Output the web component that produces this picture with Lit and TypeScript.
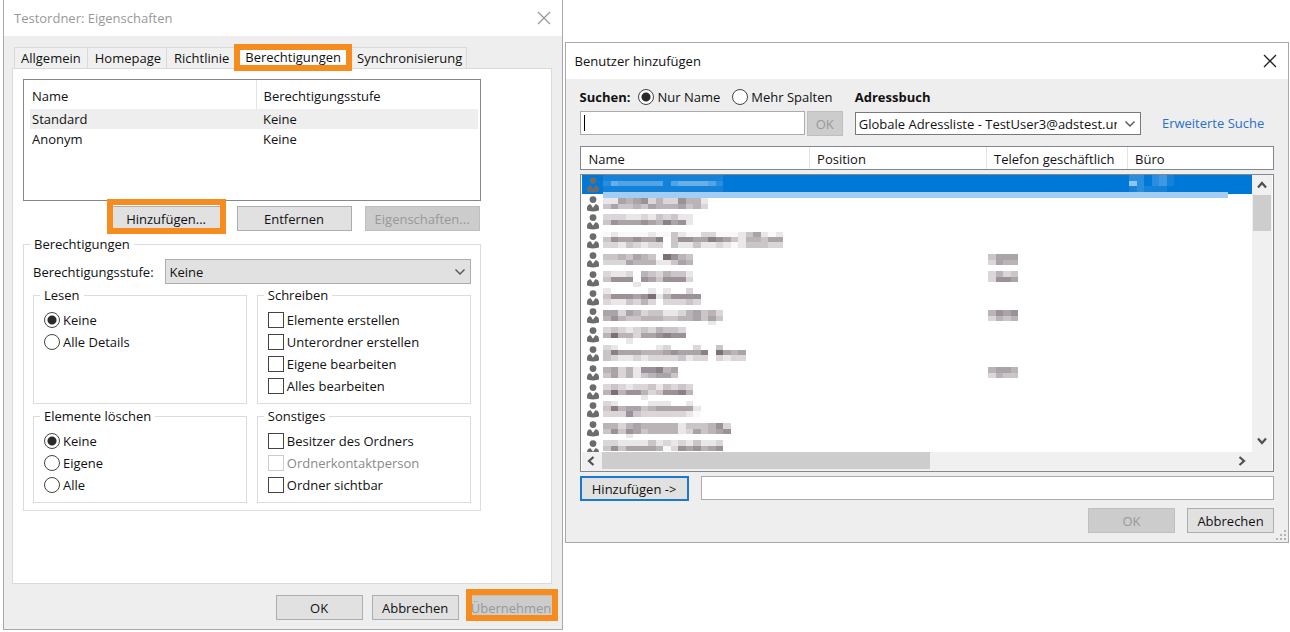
import { LitElement, html, css, svg, nothing } from "lit";
import { customElement, property, state } from "lit/decorators.js";

const controls = css`
  * {
    box-sizing: border-box;
  }
  button,
  input,
  select,
  legend,
  table {
    font: inherit;
    color: inherit;
  }
  .dialog {
    background: #eee;
    border: 1px solid #a9a9a9;
  }
  .titlebar {
    display: flex;
    align-items: center;
    justify-content: space-between;
    height: 36px;
    padding: 0 11px 0 10px;
    background: #fff;
  }
  .title {
    margin: 0;
    font-size: 13px;
    font-weight: 400;
  }
  .close {
    display: flex;
    padding: 0;
    border: 0;
    background: none;
  }
  .btn {
    height: 25px;
    min-width: 87px;
    padding: 0;
    border: 1px solid #adadad;
    border-radius: 0;
    background: #e1e1e1;
    font-weight: 500;
  }
  .btn:disabled {
    border-color: #bfbfbf;
    background: #ccc;
    color: #999;
    font-weight: 400;
  }
  .choice {
    display: flex;
    align-items: center;
    gap: 3px;
    height: 22px;
    white-space: nowrap;
  }
  .choice.off {
    color: #8a8a8a;
  }
  .tick {
    appearance: none;
    flex: none;
    width: 16px;
    height: 16px;
    margin: 0;
    border: 1px solid #444;
    background: #fff;
  }
  .tick[type="radio"] {
    border-radius: 50%;
  }
  .tick[type="radio"]:checked {
    background: radial-gradient(circle, #2a2a2a 4px, #fff 5px);
  }
  .tick:disabled {
    border-color: #ccc;
  }
  .pick {
    position: relative;
    display: block;
  }
  .pick select {
    display: block;
    appearance: none;
    width: 100%;
    border: 1px solid #adadad;
    border-radius: 0;
    background: #e1e1e1;
  }
  .pick svg {
    position: absolute;
    right: 5px;
    top: 50%;
    margin-top: -4px;
    pointer-events: none;
  }
  .marked {
    position: relative;
  }
  .marked::after {
    content: "";
    position: absolute;
    border: 6px solid #f78c1e;
    pointer-events: none;
  }
  table {
    width: 100%;
    border-collapse: collapse;
    table-layout: fixed;
  }
  th {
    font-weight: 400;
    text-align: left;
  }
`;

const cross = html`<svg width="14" height="14" viewBox="0 0 14 14" fill="none" stroke="currentColor" stroke-width="1.3">
  <path d="M1 1l12 12M13 1L1 13" />
</svg>`;

const chevron = html`<svg width="12" height="8" viewBox="0 0 12 8" fill="none" stroke="#555" stroke-width="1.4">
  <path d="M1.5 1.5L6 6l4.500-4.500" />
</svg>`;

const arrow = (d: string) => html`<svg width="12" height="12" viewBox="0 0 12 12" fill="none" stroke="#505050" stroke-width="2.200">
  <path d=${d} />
</svg>`;

interface Choice {
  label: string;
  on?: boolean;
  off?: boolean;
}

@customElement("choice-group")
class ChoiceGroup extends LitElement {
  @property() legend = "";
  @property() kind = "radio";
  @property({ attribute: false }) items: Choice[] = [];

  static styles = [
    controls,
    css`
      :host {
        display: grid;
      }
      .group {
        min-width: 0;
        margin: 0;
        padding: 5px 10px 6px;
        border: 1px solid #dcdcdc;
      }
      legend {
        height: 18px;
        margin-left: -4px;
        padding: 0 4px;
        line-height: 18px;
      }
    `,
  ];

  render() {
    return html`<fieldset class="group">
      <legend>${this.legend}</legend>
      ${this.items.map(
        (c) => html`<label class="choice ${c.off ? "off" : ""}">
          <input class="tick" type=${this.kind} name="choice" .checked=${!!c.on} ?disabled=${!!c.off} />${c.label}
        </label>`
      )}
    </fieldset>`;
  }
}

@customElement("folder-properties")
class FolderProperties extends LitElement {
  @state() tabs = ["Allgemein", "Homepage", "Richtlinie", "Berechtigungen", "Synchronisierung"];
  @state() rights = [
    ["Standard", "Keine"],
    ["Anonym", "Keine"],
  ];

  static styles = [
    controls,
    css`
      :host {
        display: block;
      }
      .dialog {
        border-top: 0;
      }
      .title,
      .close {
        color: #999;
      }
      .tabs {
        display: flex;
        align-items: flex-end;
        height: 32px;
        padding-left: 10px;
      }
      .tab {
        height: 21px;
        padding: 0 5px 0 7px;
        border: 1px solid #dadada;
        border-left-width: 0;
        border-bottom: 0;
        background: #f0f0f0;
        font-weight: 500;
        white-space: nowrap;
        line-height: 20px;
      }
      .tab:first-child {
        border-left-width: 1px;
        padding: 0 6px;
      }
      .tab.marked {
        height: 23px;
        padding: 0 10px;
        background: #fff;
        line-height: 20px;
      }
      .tab.marked::after {
        inset: -2px -1px -3px -1px;
      }
      .tab.marked + .tab {
        padding: 0 4px 0 5px;
      }
      .panel {
        margin: 0 10px 0 8px;
        padding: 10px 70px 72px 10px;
        border: 1px solid #dadada;
        background: #fff;
      }
      .rights {
        height: 122px;
        padding: 0 2px 0 6px;
        border: 1px solid #828790;
      }
      th {
        height: 29px;
        padding: 2px 0 0 2px;
      }
      th:first-child {
        width: 226px;
      }
      th + th {
        border-left: 1px solid #e4e4e4;
      }
      td {
        height: 20px;
        padding: 0 0 0 2px;
        line-height: 20px;
      }
      th + th,
      td + td {
        padding-left: 7px;
      }
      .current {
        background: #eee;
      }
      .actions {
        display: flex;
        justify-content: flex-end;
        gap: 13px;
        margin-top: 5px;
        padding-right: 1px;
      }
      .actions .btn {
        width: 115px;
      }
      .actions .marked::after {
        inset: -8px -3px -4px;
      }
      .outer {
        min-width: 0;
        margin: 4px 0 0;
        padding: 6px 9px 7px;
        border: 1px solid #dcdcdc;
      }
      .outer legend {
        height: 18px;
        margin-left: -3px;
        padding: 0 4px;
        line-height: 18px;
      }
      .level {
        display: grid;
        grid-template-columns: auto 1fr;
        align-items: center;
        gap: 11px;
      }
      .level select {
        height: 25px;
        padding: 0 20px 0 4px;
      }
      .groups {
        display: grid;
        grid-template-columns: 1fr 1fr;
        gap: 3px 10px;
        margin-top: 2px;
      }
      .footer {
        display: flex;
        justify-content: flex-end;
        gap: 9px;
        padding: 11px 7px 9px;
      }
      .footer .marked::after {
        inset: -7px -4px -2px -3px;
      }
    `,
  ];

  render() {
    return html`<section class="dialog" aria-label="Testordner: Eigenschaften">
      <header class="titlebar">
        <h1 class="title">Testordner: Eigenschaften</h1>
        <button class="close" aria-label="Schließen">${cross}</button>
      </header>
      <div class="tabs" role="tablist">
        ${this.tabs.map(
          (t, i) => html`<button class="tab ${i === 3 ? "marked" : ""}" role="tab" aria-selected=${i === 3}>${t}</button>`
        )}
      </div>
      <div class="panel">
        <div class="rights">
          <table>
            <thead>
              <tr><th>Name</th><th>Berechtigungsstufe</th></tr>
            </thead>
            <tbody>
              ${this.rights.map(
                ([name, level], i) => html`<tr class=${i ? "" : "current"}><td>${name}</td><td>${level}</td></tr>`
              )}
            </tbody>
          </table>
        </div>
        <div class="actions">
          <button class="btn marked">Hinzufügen...</button>
          <button class="btn">Entfernen</button>
          <button class="btn" disabled>Eigenschaften...</button>
        </div>
        <fieldset class="outer">
          <legend>Berechtigungen</legend>
          <div class="level">
            <label for="level">Berechtigungsstufe:</label>
            <span class="pick"><select id="level"><option>Keine</option></select>${chevron}</span>
          </div>
          <div class="groups">
            <choice-group legend="Lesen" .items=${[{ label: "Keine", on: true }, { label: "Alle Details" }]}></choice-group>
            <choice-group
              legend="Schreiben"
              kind="checkbox"
              .items=${[
                { label: "Elemente erstellen" },
                { label: "Unterordner erstellen" },
                { label: "Eigene bearbeiten" },
                { label: "Alles bearbeiten" },
              ]}
            ></choice-group>
            <choice-group
              legend="Elemente löschen"
              .items=${[{ label: "Keine", on: true }, { label: "Eigene" }, { label: "Alle" }]}
            ></choice-group>
            <choice-group
              legend="Sonstiges"
              kind="checkbox"
              .items=${[
                { label: "Besitzer des Ordners" },
                { label: "Ordnerkontaktperson", off: true },
                { label: "Ordner sichtbar" },
              ]}
            ></choice-group>
          </div>
        </fieldset>
      </div>
      <footer class="footer">
        <button class="btn">OK</button>
        <button class="btn">Abbrechen</button>
        <button class="btn marked" disabled>Übernehmen</button>
      </footer>
    </section>`;
  }
}

/* Redacted entries: each string is a strip of mosaic cells, digit = darkness. */
const people: { name: string[]; phone?: string[] }[] = [
  { name: ["1111111111111111", "2544444414555542", "1111111111111111"] },
  { name: ["11545624226441", "35334354445342"] },
  { name: ["222112132311", "365556547561"] },
  { name: ["010000100310022000135101", "36556557.366557653144355", "22132122.311311210133322"] },
  { name: ["3343543.8643", "222544411354"], phone: ["3555", "2544"] },
  { name: ["2112.4324331", "3666.6536662", "....1......."], phone: ["2423", "2665"] },
  { name: ["1.....1.1..2.", "3666568146666", "2113242.22232"] },
  { name: ["5525423311245342", "4643344433445353", "..............1."], phone: ["4656", "2434"] },
  { name: ["23212324332", "48442556766", "...1......."] },
  { name: ["21.....12...2..3", "37555444565557.8545", "32112122223122.2122"] },
  { name: ["4524166745", "3524134553"], phone: ["4554", "2433"] },
  { name: ["232122313232", "484664236674", ".....1......"] },
  { name: ["21....111..1.", "3745534555551", "2226322222210"] },
  { name: ["44245444441333462", "36365344441253456", "...1............."] },
  { name: ["2211113121213112", "3635555402656456"] },
];

const tone = (n: number, x: number) => `rgb(${250 - n * 16},${248 - n * 17},${249 - n * 16 - (x % 3)})`;

const mosaic = (strips: string[], dy: number, blue = false) => {
  const cols = Math.max(...strips.map((s) => s.length));
  return html`<svg class="mosaic" width=${Math.ceil(cols * 7.5)} height="19" shape-rendering="crispEdges">
    ${strips.map((s, y) =>
      [...s].map((c, x) =>
        c === "."
          ? nothing
          : svg`<rect x=${x * 7.5} y=${dy + y * 5.7} width="7.500" height="5.700"
              fill=${blue ? "#cfe6fa" : tone(Number(c), x)} fill-opacity=${blue ? Number(c) * 0.1 : 1} />`
      )
    )}
  </svg>`;
};

const person = html`<svg class="person" width="14" height="17" viewBox="0 0 14 17" fill="#6c6c6c">
  <circle cx="7" cy="4.600" r="3.400" />
  <path d="M1 15.300V13c0-2.200 1.500-3.500 3.600-3.700L7 12.800l2.400-3.500C11.500 9.500 13 10.800 13 13v2.300c-1 .8-3 1.100-6 1.100s-5-.3-6-1.100z" />
</svg>`;

@customElement("add-users")
class AddUsers extends LitElement {
  @state() columns = ["Name", "Position", "Telefon geschäftlich", "Büro"];

  static styles = [
    controls,
    css`
      :host {
        display: block;
      }
      .titlebar {
        padding: 0 11px 0 9px;
      }
      .close {
        color: #222;
      }
      .body {
        padding: 7px 14px 9px;
      }
      .search {
        display: grid;
        grid-template-columns: 263fr 286fr 121fr;
        column-gap: 12px;
        align-items: end;
      }
      .modes {
        display: flex;
        align-items: center;
        height: 22px;
        margin-bottom: 3px;
      }
      .modes .choice + .choice {
        margin-left: 12px;
      }
      .strong {
        font-weight: 700;
      }
      .modes .strong {
        margin-right: 8px;
      }
      .query {
        display: flex;
        gap: 2px;
      }
      .field {
        flex: 1;
        min-width: 0;
        height: 24px;
        padding: 0 4px;
        border: 1px solid #ababab;
        border-radius: 0;
        background: #fff;
      }
      .query .field {
        background: linear-gradient(#000, #000) 3px 3px / 1px 16px no-repeat #fff;
      }
      .query .btn {
        min-width: 36px;
      }
      .book {
        display: flex;
        align-items: center;
        height: 22px;
        margin-bottom: 4px;
      }
      .pick {
        margin-bottom: 1px;
      }
      .pick select {
        height: 23px;
        padding: 0 23px 0 3px;
        border-color: #7a7a7a;
        background: #fff;
      }
      .more {
        height: 22px;
        margin-bottom: 2px;
        padding-left: 9px;
        color: #2a6fc9;
        line-height: 22px;
        text-decoration: none;
        white-space: nowrap;
      }
      .heads {
        margin-top: 10px;
        border: 1px solid #828790;
        background: #fff;
      }
      .c1 {
        width: 229px;
      }
      .c2 {
        width: 177px;
      }
      .c3 {
        width: 141px;
      }
      th {
        height: 22px;
        padding: 1px 0 0 8px;
        line-height: 20px;
        white-space: nowrap;
      }
      th + th {
        padding-left: 7px;
        border-left: 1px solid #e4e4e4;
      }
      .list {
        position: relative;
        display: grid;
        grid-template-columns: 1fr 20px;
        grid-template-rows: 277px 19px;
        margin-top: 4px;
        padding: 0 1px;
        border: 1px solid #828790;
        background: #fff;
      }
      .view {
        overflow: hidden;
      }
      .view table {
        height: 282px;
      }
      .view td {
        padding: 0;
        overflow: hidden;
      }
      .cell {
        display: flex;
        align-items: center;
        height: 18px;
        overflow: hidden;
      }
      .person {
        flex: none;
        margin: 0 3px 0 4px;
      }
      .mosaic {
        display: block;
        flex: none;
      }
      .chosen {
        background: #0078d7;
      }
      .band {
        position: absolute;
        left: 22px;
        right: 45px;
        top: 17px;
        height: 6px;
        background: #a4cdf1;
      }
      .vbar {
        display: flex;
        flex-direction: column;
        align-items: center;
        padding: 4px 1px 5px;
        background: #f0f0f0;
      }
      .vthumb {
        align-self: stretch;
        height: 36px;
        margin: 4px 0 auto;
        background: #cdcdcd;
      }
      .hbar {
        grid-column: 1 / 3;
        display: flex;
        align-items: center;
        padding: 0 24px 2px 3px;
        background: #f0f0f0;
      }
      .hthumb {
        flex: 0 0 328px;
        height: 17px;
        margin: 0 auto 0 5px;
        background: #cdcdcd;
      }
      .chosenlist {
        display: flex;
        align-items: flex-start;
        gap: 12px;
        margin-top: 4px;
      }
      .chosenlist .btn {
        width: 109px;
        border: 2px solid #1a78cf;
      }
      .footer {
        display: flex;
        justify-content: flex-end;
        gap: 12px;
        margin-top: 7px;
      }
      .grip {
        position: absolute;
        right: 1px;
        bottom: 1px;
      }
      .dialog {
        position: relative;
      }
    `,
  ];

  render() {
    return html`<section class="dialog" aria-label="Benutzer hinzufügen">
      <header class="titlebar">
        <h1 class="title">Benutzer hinzufügen</h1>
        <button class="close" aria-label="Schließen">${cross}</button>
      </header>
      <div class="body">
        <div class="search">
          <div>
            <div class="modes">
              <label class="strong" for="query">Suchen:</label>
              <label class="choice"><input class="tick" type="radio" name="mode" checked />Nur Name</label>
              <label class="choice"><input class="tick" type="radio" name="mode" />Mehr Spalten</label>
            </div>
            <div class="query">
              <input class="field" id="query" type="text" />
              <button class="btn" disabled>OK</button>
            </div>
          </div>
          <div>
            <label class="book strong" for="book">Adressbuch</label>
            <span class="pick">
              <select id="book"><option>Globale Adressliste - TestUser3@adstest.uni</option></select>${chevron}
            </span>
          </div>
          <a class="more" href="#">Erweiterte Suche</a>
        </div>
        <div class="heads">
          <table>
            <colgroup><col class="c1" /><col class="c2" /><col class="c3" /><col /></colgroup>
            <thead><tr>${this.columns.map((c) => html`<th>${c}</th>`)}</tr></thead>
          </table>
        </div>
        <div class="list">
          <div class="view">
            <table aria-label="Adressliste">
              <colgroup><col class="c1" /><col class="c2" /><col class="c3" /><col /></colgroup>
              <tbody>
                ${people.map((p, i) => {
                  const dy = i ? [4, 2, 0][(i - 1) % 3] : 0;
                  return html`<tr class=${i ? "" : "chosen"}>
                    <td><div class="cell">${person}${mosaic(p.name, dy, !i)}</div></td>
                    <td></td>
                    <td>${p.phone ? html`<div class="cell">${mosaic(p.phone, dy)}</div>` : nothing}</td>
                    <td>${i ? nothing : html`<div class="cell">${mosaic(["220231", "720231", "121110"], 0, true)}</div>`}</td>
                  </tr>`;
                })}
              </tbody>
            </table>
          </div>
          <div class="vbar">
            ${arrow("M2 8.500L6 4l4 4.500")}
            <div class="vthumb"></div>
            ${arrow("M2 3.500L6 8l4-4.500")}
          </div>
          <div class="hbar">
            ${arrow("M8.500 2L4 6l4.500 4")}
            <div class="hthumb"></div>
            ${arrow("M3.500 2L8 6l-4.500 4")}
          </div>
          <div class="band"></div>
        </div>
        <div class="chosenlist">
          <button class="btn">Hinzufügen -&gt;</button>
          <input class="field" type="text" aria-label="Ausgewählte Benutzer" />
        </div>
        <footer class="footer">
          <button class="btn" disabled>OK</button>
          <button class="btn">Abbrechen</button>
        </footer>
      </div>
      <svg class="grip" width="12" height="12" viewBox="0 0 12 12" fill="#b5b5b5">
        <path d="M9 1h2v2H9zM9 5h2v2H9zM9 9h2v2H9zM5 5h2v2H5zM5 9h2v2H5zM1 9h2v2H1z" />
      </svg>
    </section>`;
  }
}

@customElement("app-root")
class AppRoot extends LitElement {
  static styles = css`
    :host {
      display: grid;
      grid-template-columns: 560fr 725fr;
      align-items: start;
      gap: 2px;
      padding: 0 1px 2px 3px;
      background: #fff;
      color: #111;
      font: 13px/18px "Open Sans", "Noto Sans", sans-serif;
    }
    .second {
      margin-top: 42px;
    }
  `;

  render() {
    return html`<folder-properties></folder-properties><add-users class="second"></add-users>`;
  }
}
